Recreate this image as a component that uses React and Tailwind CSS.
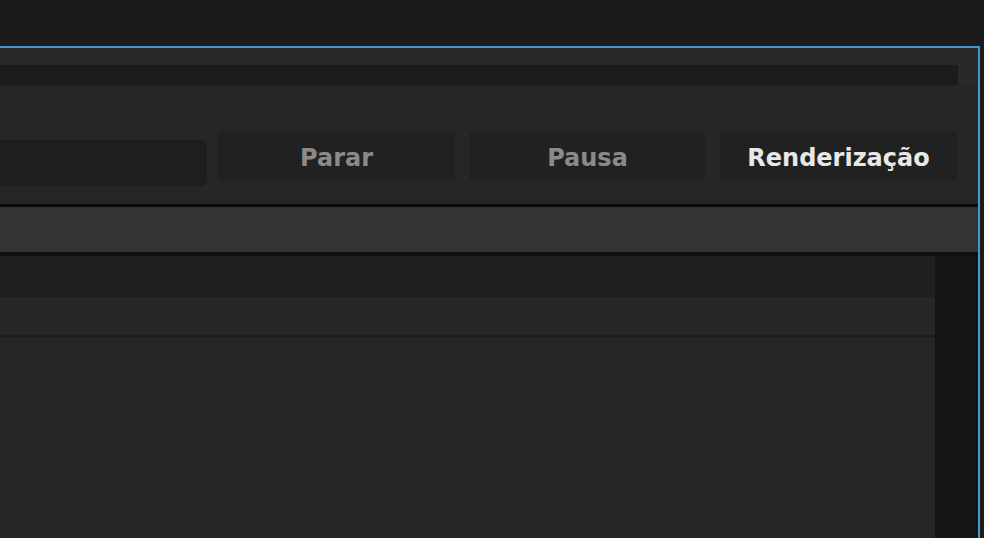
const RenderButton = ({ label, active }) => {
  return (
    <button
      className={`flex h-[48px] w-[237px] items-center justify-center rounded-[2px] bg-[#212121] pt-[4px] text-[24px] font-bold ${
        active ? "text-[#e8e8e8]" : "text-[#8a8a8a]"
      }`}
      style={{ fontFamily: '"DejaVu Sans", sans-serif' }}
    >
      {label}
    </button>
  );
};

export default function App() {
  return (
    <div className="flex h-[538px] w-[984px] flex-col overflow-hidden bg-[#1b1b1b]">
      <div className="h-[46px] shrink-0" />

      <div className="mr-[4px] flex flex-1 flex-col border-t-2 border-r-2 border-[#4398d0] bg-[#262626]">
        {/* top strip */}
        <div className="shrink-0 bg-[#292929] pt-[17px]">
          <div className="mr-[20px] h-[20px] bg-[#1c1c1c]" />
        </div>

        {/* controls */}
        <div className="flex h-[119px] shrink-0 items-start gap-[11px] bg-[#262626] pt-[47px]">
          <div className="mt-[8px] h-[46px] w-[207px] rounded-r-[5px] bg-[#1e1e1e]" />
          <div className="flex gap-[14px]">
            <RenderButton label="Parar" />
            <RenderButton label="Pausa" />
            <RenderButton label="Renderização" active />
          </div>
        </div>

        <div className="h-[3px] shrink-0 bg-[#0b0b0b]" />
        <div className="h-[45px] shrink-0 bg-[#333333]" />
        <div className="h-[4px] shrink-0 bg-[#0f0f0f]" />

        {/* list */}
        <div className="flex flex-1">
          <div className="flex flex-1 flex-col">
            <div className="h-[41px] bg-[#1f1f1f]" />
            <div className="h-[38px] bg-[#262626]" />
            <div className="h-[2px] bg-[#1d1d1d]" />
            <div className="flex-1 bg-[#252525]" />
          </div>
          <div className="w-[41px] bg-[#151515]" />
          <div className="w-[2px] bg-[#111111]" />
        </div>
      </div>
    </div>
  );
}
